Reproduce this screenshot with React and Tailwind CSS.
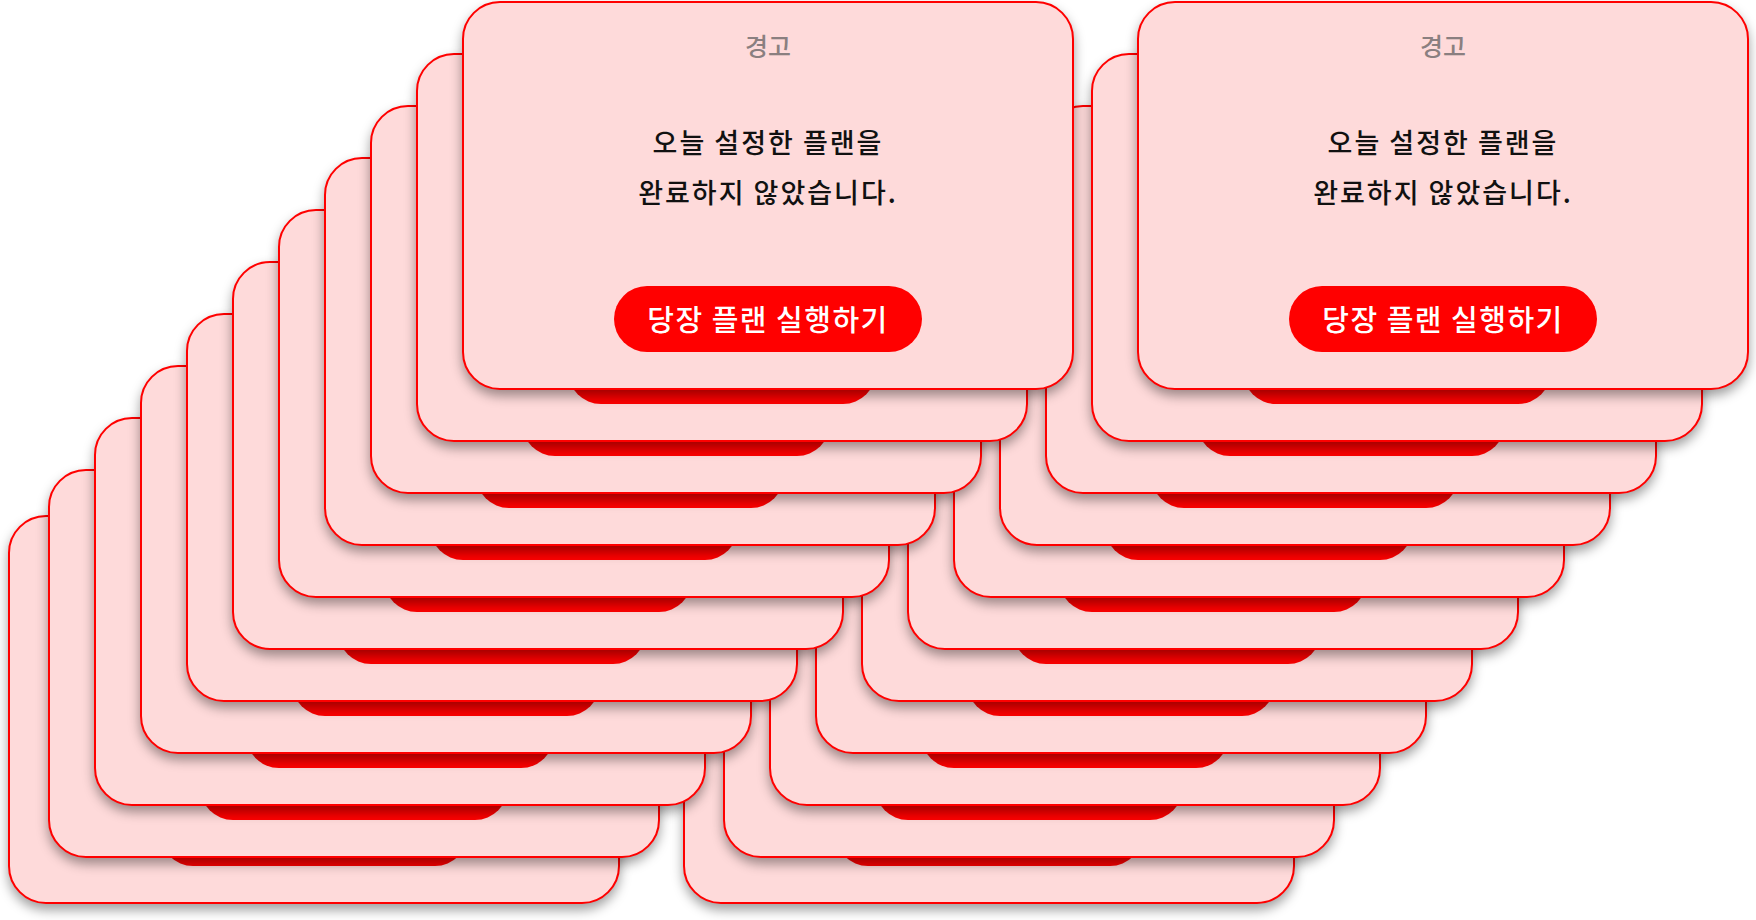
import React from "react";

const font = { fontFamily: '"Noto Sans CJK KR", "Noto Sans", sans-serif' };

// card positions in the stack, front card first
const offsets = [0, 1, 2, 3, 4, 5, 6, 7, 8, 9].map((i) => ({ x: 462 - 46 * i, y: 1 + 52 * i }));
offsets.push({ x: 8, y: 515 });

function WarningCard({ x, y }) {
  return (
    <div
      className="absolute w-[612px] h-[389px] rounded-[38px] border-2 border-[#ff0000] bg-[#fedada] shadow-[0_6px_12px_rgba(0,0,0,0.38)] flex flex-col items-center"
      style={{ left: x, top: y }}
    >
      <p className="mt-[28px] text-[25px] leading-[28px] font-medium text-[#8a7f80]">경고</p>
      <p className="mt-[58px] text-[27px] leading-[50px] font-medium text-[#111] text-center tracking-[2px]">
        오늘 설정한 플랜을
        <br />
        완료하지 않았습니다.
      </p>
      <button className="mt-[69px] w-[308px] h-[66px] rounded-full bg-[#ff0000] text-white text-[29px] font-medium tracking-[1.5px]">
        당장 플랜 실행하기
      </button>
    </div>
  );
}

function Stack({ shift }) {
  return (
    <>
      {offsets
        .slice()
        .reverse()
        .map((o, i) => (
          <WarningCard key={i} x={o.x + shift} y={o.y} />
        ))}
    </>
  );
}

export default function App() {
  return (
    <div className="relative w-full h-[920px] overflow-hidden bg-white" style={font}>
      <Stack shift={675} />
      <Stack shift={0} />
    </div>
  );
}
